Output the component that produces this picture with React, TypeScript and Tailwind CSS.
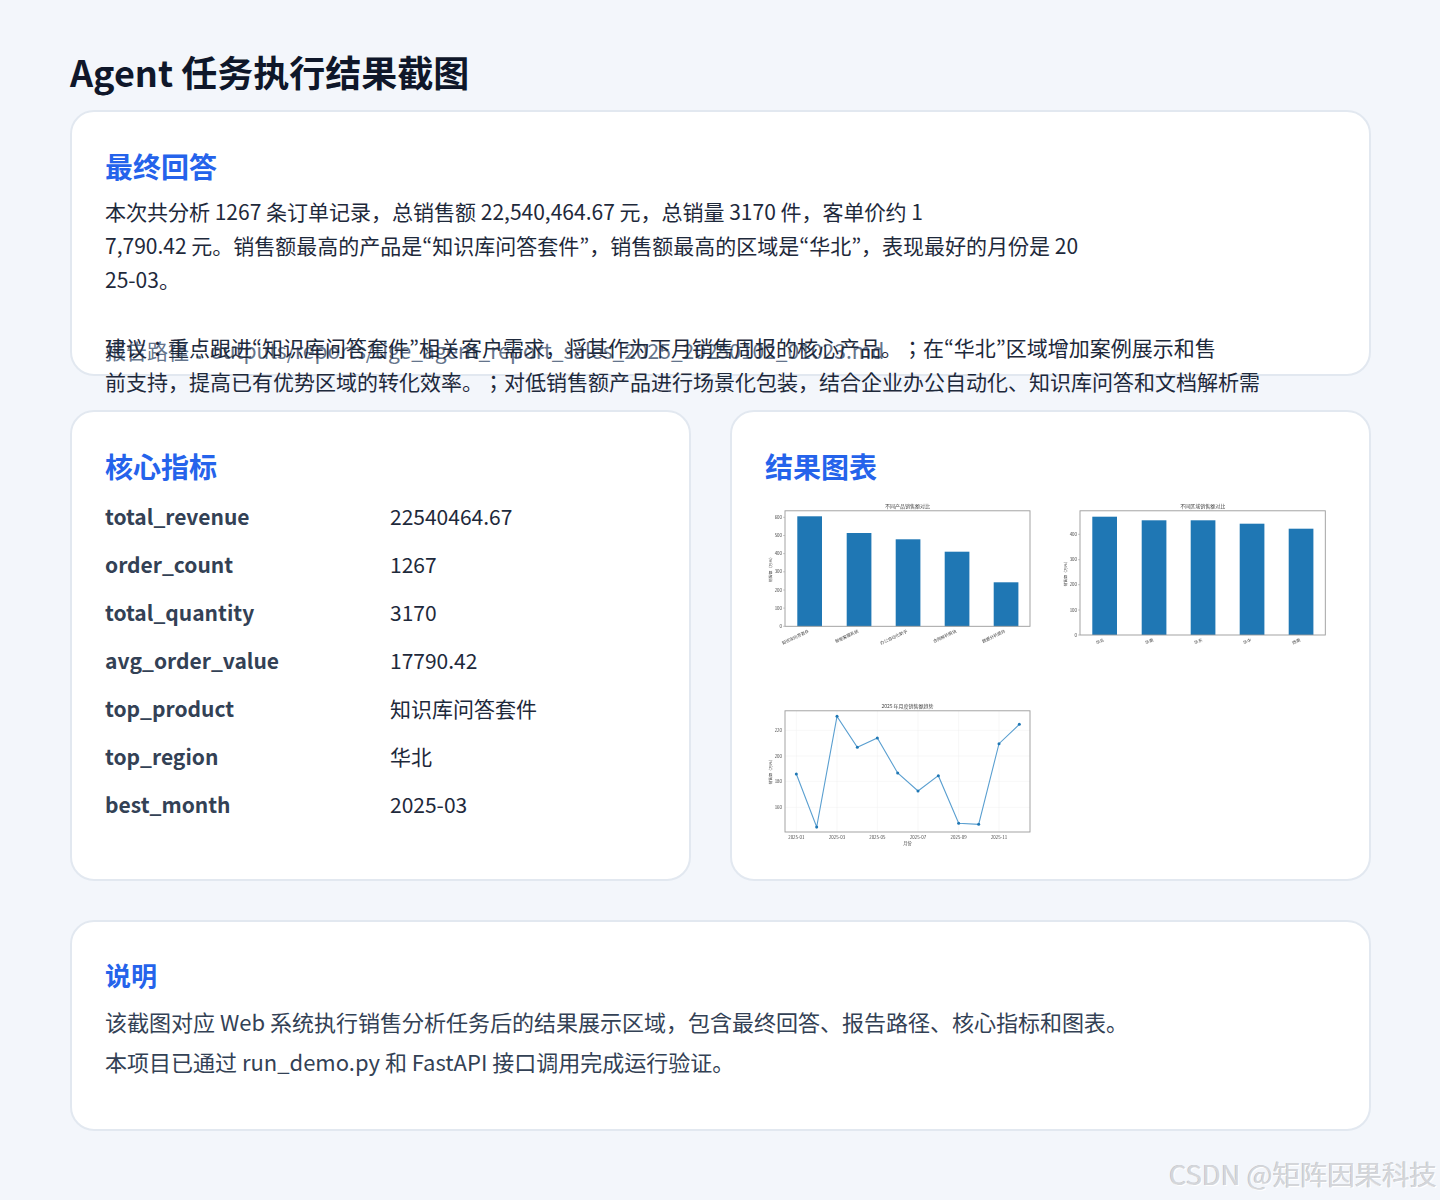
import React from "react";

const FONT = '"Noto Sans CJK JP", "Noto Sans CJK SC", "Noto Sans", sans-serif';
const BLUE = "#1f77b4";
const AXIS = "#9a9a9a";
const LABEL = "#444444";

function Bars({ ox, x1, bottom, ticks, bars, labels, title, ylabelX }: {
  ox: number; x1: number; bottom: number; ticks: [string, number][]; bars: [number, number][]; labels: string[]; title: string; ylabelX: number;
}) {
  return (
    <svg viewBox={`${ox - 20} 500 275 150`} className="w-[275px] h-[150px] block blur-[0.3px]" fontFamily={FONT}>
      <text x={(ox + x1) / 2} y={508} fontSize="5" fill={LABEL} textAnchor="middle">{title}</text>
      {bars.map(([x, top], i) => (
        <rect key={i} x={x} y={top} width={24.7} height={bottom - top} fill={BLUE} />
      ))}
      <rect x={ox} y={510.8} width={x1 - ox} height={bottom - 510.8} fill="none" stroke={AXIS} strokeWidth="0.9" />
      {ticks.map(([t, y]) => (
        <g key={t}>
          <line x1={ox - 2} x2={ox} y1={y} y2={y} stroke={AXIS} strokeWidth="0.5" />
          <text x={ox - 3} y={y + 1.5} fontSize="4.4" fill={LABEL} textAnchor="end">{t}</text>
        </g>
      ))}
      <text transform={`translate(${ylabelX} ${(511 + bottom) / 2}) rotate(-90)`} fontSize="3.9" fill={LABEL} textAnchor="middle">销售额（万元）</text>
      {labels.map((l, i) => (
        <text key={l} transform={`translate(${bars[i][0] + 12} ${bottom + 6}) rotate(-25)`} fontSize="4.2" fill={LABEL} textAnchor="end">{l}</text>
      ))}
    </svg>
  );
}

const linePts: [number, number][] = [[139,237],[200,396],[261,64],[322,157],[382,129],[443,234],[504,288],[565,242],[626,385],[686,388],[747,146],[808,88]];
const px = (x: number) => x / 3 + 750;
const py = (y: number) => y / 3 + 695;

function LineChart() {
  return (
    <svg viewBox="765 700 275 150" className="w-[275px] h-[150px] block blur-[0.3px]" fontFamily={FONT}>
      <text x={907.5} y={708} fontSize="5" fill={LABEL} textAnchor="middle">2025 年月度销售额趋势</text>
      {[139, 261, 382, 504, 626, 747].map((x) => (
        <line key={x} x1={px(x)} x2={px(x)} y1={711} y2={832} stroke="#eeeeee" strokeWidth="0.5" />
      ))}
      {[106, 183, 259, 337].map((y) => (
        <line key={y} x1={785} x2={1030} y1={py(y)} y2={py(y)} stroke="#eeeeee" strokeWidth="0.5" />
      ))}
      <polyline points={linePts.map(([x, y]) => `${px(x)},${py(y)}`).join(" ")} fill="none" stroke="#5a9fd0" strokeWidth="1.1" />
      {linePts.map(([x, y]) => (
        <circle key={x} cx={px(x)} cy={py(y)} r={1.5} fill={BLUE} />
      ))}
      <rect x={785} y={710.8} width={245} height={121.2} fill="none" stroke={AXIS} strokeWidth="0.9" />
      {[["220", 106], ["200", 183], ["180", 259], ["160", 337]].map(([t, y]) => (
        <text key={t as string} x={782} y={py(y as number) + 1.5} fontSize="4.4" fill={LABEL} textAnchor="end">{t}</text>
      ))}
      {[["2025-01", 139], ["2025-03", 261], ["2025-05", 382], ["2025-07", 504], ["2025-09", 626], ["2025-11", 747]].map(([t, x]) => (
        <text key={t as string} x={px(x as number)} y={838.8} fontSize="4.4" fill={LABEL} textAnchor="middle">{t}</text>
      ))}
      <text x={907.5} y={844.8} fontSize="4.2" fill={LABEL} textAnchor="middle">月份</text>
      <text transform="translate(772 771) rotate(-90)" fontSize="3.9" fill={LABEL} textAnchor="middle">销售额（万元）</text>
    </svg>
  );
}

const metrics: [string, string][] = [
  ["total_revenue", "22540464.67"],
  ["order_count", "1267"],
  ["total_quantity", "3170"],
  ["avg_order_value", "17790.42"],
  ["top_product", "知识库问答套件"],
  ["top_region", "华北"],
  ["best_month", "2025-03"],
];

const answerLines = [
  "本次共分析 1267 条订单记录，总销售额 22,540,464.67 元，总销量 3170 件，客单价约 1",
  "7,790.42 元。销售额最高的产品是“知识库问答套件”，销售额最高的区域是“华北”，表现最好的月份是 20",
  "25-03。",
  "",
  "建议：重点跟进“知识库问答套件”相关客户需求，将其作为下月销售周报的核心产品。；在“华北”区域增加案例展示和售",
  "前支持，提高已有优势区域的转化效率。；对低销售额产品进行场景化包装，结合企业办公自动化、知识库问答和文档解析需",
].join("\n");

const cardClass = "bg-white border-2 border-[#e2e8f0] rounded-[24px] px-[33px] pt-[32px]";
const h2Class = "text-[28px] leading-[44px] font-bold text-[#2563eb]";

export default function App() {
  return (
    <div className="relative h-[1200px] overflow-hidden bg-[#f3f6fb] pl-[70px] pr-[69px] pt-[46px] [text-spacing-trim:space-all]" style={{ fontFamily: FONT }}>
      <h1 className="text-[36px] leading-[50px] font-bold text-[#0f172a]">Agent 任务执行结果截图</h1>

      <section className={`${cardClass} h-[266px] mt-[14px]`}>
        <h2 className={h2Class}>最终回答</h2>
        <div className="mt-[6px] h-[139px] whitespace-pre text-[21px] leading-[34px] text-[#1e293b] relative z-10">{answerLines}</div>
        <p className="text-[21px] leading-[34px] text-[#64748b] whitespace-nowrap">报告路径：outputs/reports/tige_agent_report_sales_2025_20250102_01023.md</p>
      </section>

      <div className="grid grid-cols-[621px_641px] gap-x-[39px] mt-[34px]">
        <section className={`${cardClass} h-[471px]`}>
          <h2 className={h2Class}>核心指标</h2>
          <div className="flex flex-col mt-[5px]">
            {metrics.map(([k, v]) => (
              <div key={k} className="flex h-[48px] items-center text-[21px]">
                <span className="w-[285px] font-semibold text-[#334155]">{k}</span>
                <span className="text-[#1e293b]">{v}</span>
              </div>
            ))}
          </div>
        </section>
        <section className={`${cardClass} h-[471px]`}>
          <h2 className={h2Class}>结果图表</h2>
          <div className="grid grid-cols-[275px_275px] gap-x-[20px] gap-y-[50px] mt-[12px]">
            <Bars ox={785} x1={1030} bottom={626.3} title="不同产品销售额对比" ylabelX={772}
              ticks={[["600",517.3],["500",535.5],["400",553.6],["300",571.8],["200",590],["100",608.1],["0",626.3]]}
              bars={[[797.3,516.3],[846.7,533],[895.7,539.3],[944.7,551.7],[993.7,582.3]]}
              labels={["知识库问答套件","智能客服系统","办公自动化助手","合同解析模块","数据分析插件"]} />
            <Bars ox={1080} x1={1325.3} bottom={635} title="不同区域销售额对比" ylabelX={1067}
              ticks={[["400",534.3],["300",559.7],["200",584.7],["100",610],["0",635]]}
              bars={[[1092.3,516.7],[1141.7,520.3],[1190.7,520.3],[1239.7,523.7],[1288.7,528.7]]}
              labels={["华北","华南","华东","华中","西南"]} />
            <LineChart />
          </div>
        </section>
      </div>

      <section className={`${cardClass} h-[211px] mt-[39px]`}>
        <h2 className="text-[26px] leading-[42px] font-bold text-[#2563eb]">说明</h2>
        <div className="mt-[5px] text-[22px] leading-[40px] text-[#334155] whitespace-nowrap">
          <p>该截图对应 Web 系统执行销售分析任务后的结果展示区域，包含最终回答、报告路径、核心指标和图表。</p>
          <p>本项目已通过 run_demo.py 和 FastAPI 接口调用完成运行验证。</p>
        </div>
      </section>

      <div className="absolute right-[3px] bottom-[9px] text-[27.4px] leading-[36px] text-[#d4d6da] [text-shadow:1px_1px_0_#ffffff,-0.5px_-0.5px_0_#b8bbc0]">CSDN @矩阵因果科技</div>
    </div>
  );
}
